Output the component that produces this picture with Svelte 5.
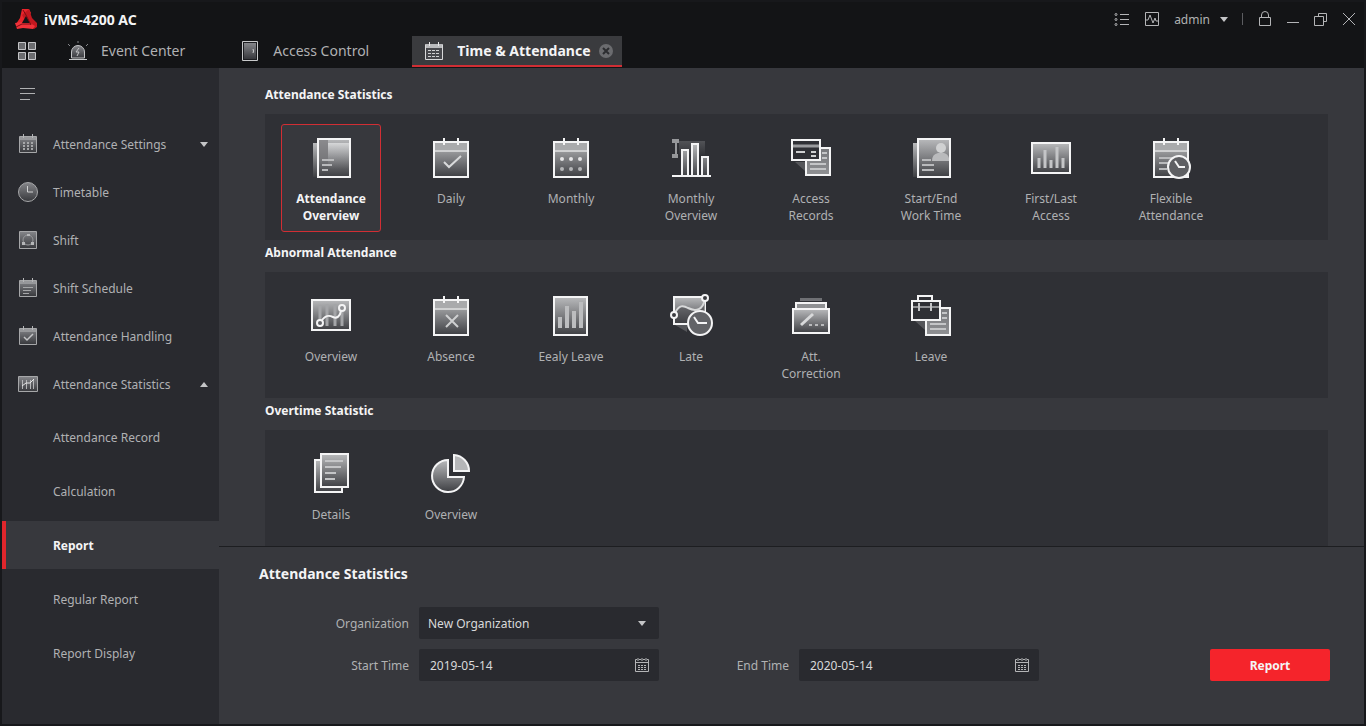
<script lang="ts">
  type Item = { icon: string; label: string };

  const tabs: Item[] = [
    { icon: "alarm", label: "Event Center" },
    { icon: "door", label: "Access Control" },
    { icon: "calendar", label: "Time & Attendance" },
  ];

  const menu = [
    { icon: "settings", label: "Attendance Settings", arrow: "down" },
    { icon: "clock", label: "Timetable", arrow: "" },
    { icon: "shift", label: "Shift", arrow: "" },
    { icon: "schedule", label: "Shift Schedule", arrow: "" },
    { icon: "handling", label: "Attendance Handling", arrow: "" },
    { icon: "statistics", label: "Attendance Statistics", arrow: "up" },
  ];

  const submenu = ["Attendance Record", "Calculation", "Report", "Regular Report", "Report Display"];

  const sections: { title: string; items: Item[] }[] = [
    {
      title: "Attendance Statistics",
      items: [
        { icon: "att-overview", label: "Attendance Overview" },
        { icon: "daily", label: "Daily" },
        { icon: "monthly", label: "Monthly" },
        { icon: "monthly-overview", label: "Monthly Overview" },
        { icon: "access", label: "Access Records" },
        { icon: "work-time", label: "Start/End Work Time" },
        { icon: "first-last", label: "First/Last Access" },
        { icon: "flexible", label: "Flexible Attendance" },
      ],
    },
    {
      title: "Abnormal Attendance",
      items: [
        { icon: "abn-overview", label: "Overview" },
        { icon: "absence", label: "Absence" },
        { icon: "early", label: "Eealy Leave" },
        { icon: "late", label: "Late" },
        { icon: "correction", label: "Att. Correction" },
        { icon: "leave", label: "Leave" },
      ],
    },
    {
      title: "Overtime Statistic",
      items: [
        { icon: "details", label: "Details" },
        { icon: "pie", label: "Overview" },
      ],
    },
  ];

  let activeTab = $state("Time & Attendance");
  let activePage = $state("Report");
  let activeReport = $state("att-overview");
  let organization = $state("New Organization");
  let startTime = $state("2019-05-14");
  let endTime = $state("2020-05-14");
</script>

{#snippet calendarBase()}
  <rect x="7" y="8" width="34" height="35" fill="url(#shade)" />
  <path d="M8 9h32v7H8z" fill="#a9aaac" stroke="none" />
  <path d="M8 17h32" stroke="#d0d1d2" />
  <path d="M17 4v7M31 4v7" />
{/snippet}

{#snippet reportIcon(name: string)}
  <svg class="report-icon" viewBox="0 0 48 48" aria-hidden="true">
    {#if name === "att-overview"}
      <path d="M6 9h4v34H6z" fill="url(#shade)" stroke="none" />
      <rect x="11" y="5" width="32" height="38" fill="url(#shade)" />
      <path d="M12 6h9v20h-9z" fill="#77787b" opacity="0.7" stroke="none" />
      <path d="M21 9h21v26H21z" fill="url(#glow)" stroke="none" />
      <path d="M15 26h12M15 31h10M15 36h6" stroke="#b9babc" />
    {:else if name === "daily"}
      {@render calendarBase()}
      <path d="M17 28l5 5 12-11" stroke="#d9dadb" />
    {:else if name === "monthly"}
      {@render calendarBase()}
      <g fill="#e6e6e7" stroke="none">
        <circle cx="15" cy="25" r="2" /><circle cx="24" cy="25" r="2" /><circle cx="33" cy="25" r="2" />
      </g>
      <g fill="#b4b5b7" stroke="none">
        <circle cx="15" cy="35" r="2" /><circle cx="24" cy="35" r="2" /><circle cx="33" cy="35" r="2" />
      </g>
    {:else if name === "monthly-overview"}
      <path d="M12 7h26v14H12z" fill="url(#shade)" opacity="0.25" stroke="none" />
      <path d="M5 5h7v4H5zM5 20h6v4H5zM8 9h2v11H8z" fill="#97989b" stroke="none" />
      <path d="M15 42V16h6v26M25 42V10h6v32M35 42V23h6v19" fill="url(#shade)" />
      <path d="M5 42h39" />
    {:else if name === "access"}
      <path d="M8 28h10v9z" fill="#55565a" stroke="none" />
      <rect x="19" y="14" width="24" height="27" fill="url(#pale)" />
      <path d="M35 19h5M35 24h5M23 30h16M23 35h16" stroke="#c4c5c7" />
      <rect x="5" y="6" width="28" height="20" fill="#2f3035" />
      <path d="M6 12h26" stroke="#9a9b9e" stroke-width="3" />
      <path d="M9 18h9M24 18h5M24 22h5" stroke="#cfd0d1" />
    {:else if name === "work-time"}
      <path d="M6 9h4v34H6z" fill="url(#shade)" stroke="none" />
      <rect x="11" y="5" width="32" height="38" fill="url(#shade)" />
      <circle cx="34" cy="14" r="5" fill="#d0d1d2" stroke="none" />
      <path d="M25 27q0-7 6-8h6q4 1 5 5v3z" fill="#b9babc" stroke="none" />
      <path d="M15 26h9M15 31h12M15 36h12" stroke="#b9babc" />
    {:else if name === "first-last"}
      <rect x="5" y="9" width="38" height="30" fill="url(#shade)" />
      <path d="M12 34V24M18 34V16M24 34V26M30 34V13M36 34V24" stroke="#c4c5c7" stroke-width="3" />
    {:else if name === "flexible"}
      {@render calendarBase()}
      <path d="M12 24h14M12 29h10M12 35h8" stroke="#b9babc" />
      <circle cx="32" cy="33" r="11" fill="#5e5f63" />
      <path d="M28 27l4 6h6" />
    {:else if name === "abn-overview"}
      <rect x="5" y="8" width="38" height="30" fill="url(#shade)" />
      <path d="M13 14v20M20 12v22M28 12v22M35 20v14" stroke="#a4a5a8" stroke-width="3" />
      <path d="M15 28c4-5 7-5 11-3s7-1 8-6" />
      <circle cx="13" cy="31" r="3" fill="#626367" />
      <circle cx="35" cy="16" r="3" fill="#8e8f92" />
    {:else if name === "absence"}
      {@render calendarBase()}
      <path d="M19 23l12 12M31 23L19 35" stroke="#cfd0d1" />
    {:else if name === "early"}
      <rect x="7" y="5" width="33" height="38" fill="url(#shade)" />
      <path d="M13 36V25M20 36V14M27 36V19M34 36V10" stroke="#bcbdbf" stroke-width="4" />
    {:else if name === "late"}
      <path d="M8 33l12 7V33z" fill="#55565a" stroke="none" />
      <path d="M7 5h31v27H7z" fill="url(#shade)" />
      <path d="M8 21c4-8 8-8 13-5 8 4 15 2 17-9v24H8z" fill="#3d3e42" opacity="0.5" stroke="none" />
      <path d="M8 21c4-8 8-8 13-5 8 4 15 2 17-9" stroke="#d8d9da" />
      <circle cx="7" cy="23" r="3" fill="#3a3b3f" />
      <circle cx="38" cy="6" r="3" fill="#3a3b3f" />
      <circle cx="33" cy="31" r="12" fill="#626367" />
      <path d="M27 25l4 6h9" />
    {:else if name === "correction"}
      <path d="M13 6h22v3H13z" fill="#6f7074" stroke="none" />
      <path d="M9 16v-5h30v5" fill="#8f9093" />
      <rect x="6" y="17" width="36" height="24" fill="url(#shade)" />
      <path d="M14 33l12-11" stroke="#d8d9da" stroke-width="3" />
      <path d="M22 33h3M28 33h3M34 33h3" stroke="#b9babc" />
    {:else if name === "leave"}
      <path d="M8 29h10v9z" fill="#55565a" stroke="none" />
      <rect x="19" y="16" width="24" height="27" fill="url(#pale)" />
      <path d="M35 21h5M35 26h5M23 32h16M23 37h16" stroke="#c4c5c7" />
      <path d="M11 8V4h14v4" />
      <rect x="5" y="9" width="28" height="19" fill="#2f3035" />
      <path d="M6 15h26" stroke="#8f9093" />
      <path d="M12 11v8M24 11v8" stroke="#c4c5c7" />
    {:else if name === "details"}
      <rect x="8" y="10" width="27" height="32" fill="url(#shade)" />
      <rect x="14" y="4" width="27" height="33" fill="url(#shade)" />
      <path d="M18 11h18M18 17h16M18 23h11M18 29h10" stroke="#c4c5c7" />
    {:else if name === "pie"}
      <path d="M21 10a16 16 0 1 0 16 17H21z" fill="url(#shade)" />
      <path d="M27 5a16 16 0 0 1 15 16H27z" fill="#b5b6b8" />
    {/if}
  </svg>
{/snippet}

{#snippet menuIcon(name: string)}
  <svg class="menu-icon" viewBox="0 0 20 20" aria-hidden="true">
    {#if name === "clock"}
      <circle cx="10" cy="10" r="9.5" fill="url(#dim)" />
      <path d="M9.500 4v6H15" stroke="#d0d1d2" />
    {:else if name === "shift"}
      <path d="M1.500 1.500h17v17h-17z" fill="url(#dim)" />
      <circle cx="10" cy="10" r="5" stroke="#97989b" />
      <path d="M9 4h3v2H9zM4 12h3v3H4zM13 12h3v3h-3z" fill="#b5b6b8" stroke="none" />
    {:else if name === "statistics"}
      <path d="M.5 2.500h19v15H.5z" fill="url(#dim)" />
      <path d="M4.500 15V6M8.500 15V6M12.500 15V6M15.500 15V5" stroke="#b5b6b8" />
      <path d="M4 12l4-3h4l4-4" stroke="#e6e6e7" />
    {:else}
      <path d="M1.500 2.500h17v16h-17z" fill="url(#dim)" />
      <path d="M2 3h16v3H2z" fill="#97989b" stroke="none" />
      <path d="M5.500 0v4M14.500 0v4" stroke="#b5b6b8" />
      {#if name === "settings"}
        <path d="M6 8v8M10 8v8M14 8v8" stroke="#a6a7a9" stroke-width="2" stroke-dasharray="2 1" />
      {:else if name === "schedule"}
        <path d="M5 9.500h10M5 12.500h8M5 15.500h6" stroke="#a6a7a9" />
      {:else}
        <path d="M6 11l3 3 6-6" stroke="#c4c5c7" stroke-width="1.5" />
      {/if}
    {/if}
  </svg>
{/snippet}

{#snippet tabIcon(name: string)}
  <svg class="tab-icon" viewBox="0 0 22 22" aria-hidden="true">
    {#if name === "alarm"}
      <path d="M4.500 18v-6a6.500 6.500 0 0 1 13 0v6z" fill="url(#dim)" stroke="#c4c5c7" />
      <path d="M2 19.500h18" stroke="#c4c5c7" />
      <path d="M11 1v2M1 4l2 2M21 4l-2 2" stroke="#85868a" />
      <path d="M12 8l-3 4h3l-2 4" stroke="#c4c5c7" />
    {:else if name === "door"}
      <path d="M3.500 1.500h15v19h-15z" fill="#1c1d20" stroke="#c9cacb" />
      <path d="M5 3h12v16H5z" fill="url(#dim)" stroke="none" />
      <path d="M14 9q1 2 0 4" stroke="#d0d1d2" />
    {:else}
      <path d="M2.500 4.500h17v15h-17z" fill="#47484c" stroke="#d8d9da" />
      <path d="M3 4h16v4H3z" fill="#b9babc" stroke="none" />
      <path d="M6.500 2v4M15.500 2v4" stroke="#e6e6e7" />
      <path d="M5 10.500h12M5 13.500h12M5 16.500h12" stroke="#d0d1d2" stroke-dasharray="3 1" />
    {/if}
  </svg>
{/snippet}

{#snippet dateIcon()}
  <svg viewBox="0 0 16 16" width="16" height="16" fill="none" stroke="#b4b5b7" aria-hidden="true">
    <path d="M3 2.500H1.500v12h13v-12H13M5 2.500h2M9 2.500h2M1.500 5.500h13M4 1v3M8 1v3M12 1v3" />
    <path d="M4 8.500h8M4 10.500h8M4 12.500h8" stroke-dasharray="2 1" />
  </svg>
{/snippet}

<div class="window">
  <header>
    <div class="titlebar">
      <svg class="logo" viewBox="0 0 24 22" aria-hidden="true">
        <path d="M8 1h7l2 4-5 7-6 5-4-1 4-6z" fill="#e8242b" />
        <path d="M15 1l3 9 5 5v4l-3 2-7-5-5-9z" fill="#c2181f" />
        <path d="M1 15l6-1 9 1 5 3-2 3-10-1-6 1z" fill="#f0323a" />
        <path d="M12 8l4 7H8z" fill="#131416" />
        <path d="M9 2l3 5 5 10M2 19l6-3h9" fill="none" stroke="#7c0d12" />
      </svg>
      <span class="app-name">iVMS-4200 AC</span>
      <svg width="0" height="0" aria-hidden="true">
        <defs>
          <linearGradient id="shade" x1="0" y1="0" x2="0" y2="1">
            <stop offset="0" stop-color="#b9babc" /><stop offset="1" stop-color="#3e3f43" />
          </linearGradient>
          <linearGradient id="pale" x1="0" y1="0" x2="0" y2="1">
            <stop offset="0" stop-color="#77787b" /><stop offset="1" stop-color="#8f9093" />
          </linearGradient>
          <linearGradient id="dim" x1="0" y1="0" x2="0" y2="1">
            <stop offset="0" stop-color="#85868a" /><stop offset="1" stop-color="#37383c" />
          </linearGradient>
          <linearGradient id="glow" x1="0" y1="0" x2="0" y2="1">
            <stop offset="0" stop-color="#e0e1e2" stop-opacity="0.8" /><stop offset="1" stop-color="#8f9093" stop-opacity="0" />
          </linearGradient>
        </defs>
      </svg>
      <div class="tools">
        <button type="button" aria-label="Task list">
          <svg viewBox="0 0 16 16"><path d="M6 3.500h9M6 8.500h9M6 13.500h9" /><circle cx="2" cy="3.500" r="1" /><circle cx="2" cy="8.500" r="1" /><circle cx="2" cy="13.500" r="1" /></svg>
        </button>
        <button type="button" aria-label="System status">
          <svg viewBox="0 0 16 16"><path d="M1.500 1.500h13v13h-13zM2 9h2l2-5 3 8 2-5 1 3h2" /></svg>
        </button>
        <button class="user" type="button">admin <span class="caret"></span></button>
        <span class="divider"></span>
        <div class="window-buttons">
          <button type="button" aria-label="Lock">
            <svg viewBox="0 0 16 16"><path d="M2.500 6.500h11v8h-11zM4.500 6.500V4a3.500 3.500 0 0 1 7 0v2.500" /></svg>
          </button>
          <button type="button" aria-label="Minimize">
            <svg viewBox="0 0 16 16"><path d="M2 11.500h12" /></svg>
          </button>
          <button type="button" aria-label="Restore">
            <svg viewBox="0 0 16 16"><path d="M1.500 5.500h9v9h-9zM5.500 5V2.500h8v8H11" /></svg>
          </button>
          <button type="button" aria-label="Close">
            <svg viewBox="0 0 16 16"><path d="M2 2l12 12M14 2L2 14" /></svg>
          </button>
        </div>
      </div>
    </div>

    <nav class="tabs">
      <button class="home" type="button" aria-label="All modules">
        <svg viewBox="0 0 18 18" width="18" height="18" aria-hidden="true">
          <path d="M.5.5h7v7h-7zM10.500.5h7v7h-7zM.5 10.500h7v7h-7zM10.500 10.500h7v7h-7z" fill="#6b6c6f" stroke="#c4c5c7" />
        </svg>
      </button>
      {#each tabs as tab}
        <div class="tab" class:active={tab.label === activeTab}>
          <button class="tab-link" type="button" onclick={() => (activeTab = tab.label)}>
            {@render tabIcon(tab.icon)}
            {tab.label}
          </button>
          {#if tab.label === activeTab}
            <button class="tab-close" type="button" aria-label="Close tab">
              <svg viewBox="0 0 14 14" width="14" height="14" aria-hidden="true">
                <circle cx="7" cy="7" r="7" fill="#6b6c6f" />
                <path d="M4 4l6 6M10 4l-6 6" stroke="#2c2d30" stroke-width="2" />
              </svg>
            </button>
          {/if}
        </div>
      {/each}
    </nav>
  </header>

  <div class="body">
    <aside>
      <button class="collapse" type="button" aria-label="Collapse menu">
        <svg viewBox="0 0 16 12" width="16" height="12" aria-hidden="true">
          <path d="M0 .5h15M0 5.500h15M0 11.500h10" stroke="#b0b1b3" />
        </svg>
      </button>
      {#each menu as item}
        <button class="menu-item" type="button">
          {@render menuIcon(item.icon)}
          <span>{item.label}</span>
          {#if item.arrow}
            <span class="caret" class:up={item.arrow === "up"}></span>
          {/if}
        </button>
      {/each}
      <div class="submenu">
        {#each submenu as page}
          <button class="sub-item" class:active={page === activePage} type="button" onclick={() => (activePage = page)}>
            {page}
          </button>
        {/each}
      </div>
    </aside>

    <main>
      <div class="reports">
        {#each sections as section}
          <section>
            <h2>{section.title}</h2>
            <div class="panel">
              {#each section.items as item}
                <button
                  class="report"
                  class:active={item.icon === activeReport}
                  type="button"
                  onclick={() => (activeReport = item.icon)}
                >
                  {@render reportIcon(item.icon)}
                  <span>{item.label}</span>
                </button>
              {/each}
            </div>
          </section>
        {/each}
      </div>

      <form class="filter" onsubmit={(e) => e.preventDefault()}>
        <h3>Attendance Statistics</h3>
        <div class="fields">
          <label for="organization">Organization</label>
          <div class="field">
            <select id="organization" bind:value={organization}>
              <option>New Organization</option>
            </select>
            <span class="caret"></span>
          </div>
          <label class="first" for="start">Start Time</label>
          <div class="field">
            <input id="start" type="text" bind:value={startTime} />
            <button type="button" aria-label="Pick start date">{@render dateIcon()}</button>
          </div>
          <label for="end">End Time</label>
          <div class="field">
            <input id="end" type="text" bind:value={endTime} />
            <button type="button" aria-label="Pick end date">{@render dateIcon()}</button>
          </div>
          <button class="submit" type="submit">Report</button>
        </div>
      </form>
    </main>
  </div>
</div>

<style>
  :global(body) {
    margin: 0;
    background: #131416;
  }

  .window {
    height: 100vh;
    box-sizing: border-box;
    display: flex;
    flex-direction: column;
    border: 2px solid #17181b;
    background: #131416;
    color: #b0b1b3;
    font-family: "Noto Sans", "Open Sans", sans-serif;
    font-size: 12px;
  }

  button,
  input,
  select {
    font: inherit;
    color: inherit;
    background: none;
    border: 0;
    padding: 0;
    margin: 0;
  }

  button {
    cursor: pointer;
  }

  svg {
    display: block;
    flex: none;
  }

  h2,
  h3 {
    margin: 0;
    color: #f4f4f5;
    font-weight: 700;
  }

  .caret {
    flex: none;
    width: 0;
    height: 0;
    border: 4px solid transparent;
    border-top: 5px solid #c4c5c7;
    border-bottom: 0;
  }

  .caret.up {
    border-top: 0;
    border-bottom: 5px solid #c4c5c7;
  }

  .titlebar {
    height: 34px;
    display: flex;
    align-items: center;
    padding: 0 7px 0 12px;
  }

  .logo {
    width: 24px;
    height: 22px;
  }

  .app-name {
    margin-left: 6px;
    color: #f4f4f5;
    font-size: 14px;
    font-weight: 700;
  }

  .tools {
    margin-left: auto;
    display: flex;
    align-items: center;
    gap: 14px;
  }

  .tools svg {
    width: 16px;
    height: 16px;
    fill: none;
    stroke: #b4b5b7;
  }

  .user {
    display: flex;
    align-items: center;
    gap: 10px;
  }

  .divider {
    width: 1px;
    height: 12px;
    background: #5c5d61;
  }

  .window-buttons {
    display: flex;
    gap: 12px;
  }

  .tabs {
    height: 32px;
    display: flex;
    align-items: flex-start;
    font-size: 14px;
  }

  .home {
    height: 30px;
    padding: 0 20px 0 16px;
  }

  .tab {
    height: 31px;
    box-sizing: border-box;
    display: flex;
    align-items: center;
    padding: 0 43px 0 11px;
    border-bottom: 2px solid transparent;
  }

  .tab.active {
    gap: 8px;
    padding-right: 9px;
    border-bottom-color: #d12e34;
    background: #3a3b3e;
    color: #f4f4f5;
    font-weight: 700;
  }

  .tab-link {
    display: flex;
    align-items: center;
    gap: 12px;
  }

  .tab-icon {
    width: 22px;
    height: 22px;
    fill: none;
  }

  .body {
    flex: 1;
    min-height: 0;
    display: flex;
  }

  aside {
    flex: none;
    width: 217px;
    background: #292a2f;
    overflow: hidden;
  }

  .collapse {
    height: 52px;
    display: flex;
    align-items: center;
    padding: 0 18px;
  }

  .menu-item {
    width: 100%;
    height: 48px;
    display: flex;
    align-items: center;
    gap: 15px;
    padding: 0 11px 0 16px;
  }

  .menu-item .caret {
    margin-left: auto;
  }

  .menu-icon {
    width: 20px;
    height: 20px;
    fill: none;
    stroke: #a6a7a9;
  }

  .submenu {
    display: flex;
    flex-direction: column;
    gap: 6px;
    padding-top: 5px;
  }

  .sub-item {
    height: 48px;
    padding-left: 47px;
    border-left: 4px solid transparent;
    text-align: left;
  }

  .sub-item.active {
    border-left-color: #e0262c;
    background: #37383d;
    color: #f4f4f5;
    font-weight: 700;
  }

  main {
    flex: 1;
    min-width: 0;
    display: flex;
    flex-direction: column;
    background: #37383d;
  }

  .reports {
    flex: 1;
    min-height: 0;
    padding: 14px 36px 0 46px;
    overflow-y: auto;
    scrollbar-width: none;
  }

  h2 {
    padding-bottom: 6px;
    font-size: 12px;
    line-height: 26px;
  }

  .panel {
    display: flex;
    gap: 20px;
    padding: 10px 16px 8px;
    background: #2f3035;
  }

  .report {
    width: 100px;
    height: 108px;
    box-sizing: border-box;
    display: flex;
    flex-direction: column;
    align-items: center;
    gap: 8px;
    padding: 9px 12px;
    border: 1px solid transparent;
    border-radius: 3px;
    line-height: 17px;
  }

  .report.active {
    border-color: #d12e34;
    background: #37383d;
    color: #f4f4f5;
    font-weight: 700;
  }

  .report-icon {
    width: 48px;
    height: 48px;
    fill: none;
    stroke: #f4f4f5;
    stroke-width: 2;
  }

  .filter {
    padding: 15px 34px 43px 40px;
    border-top: 1px solid #1d1e21;
  }

  h3 {
    font-size: 14px;
    line-height: 24px;
  }

  .fields {
    display: grid;
    grid-template-columns: 150px 240px 120px 240px 1fr;
    gap: 10px;
    align-items: center;
    margin-top: 21px;
  }

  label {
    text-align: right;
  }

  label.first {
    grid-column: 1;
  }

  .field {
    height: 32px;
    box-sizing: border-box;
    display: flex;
    align-items: center;
    padding: 0 9px;
    border-radius: 2px;
    background: #292a2f;
    color: #d8d9da;
  }

  .field select,
  .field input {
    flex: 1;
    min-width: 0;
    height: 32px;
    appearance: none;
    outline: none;
  }

  .field input {
    padding-left: 2px;
  }

  .field .caret {
    margin-right: 4px;
  }

  .submit {
    width: 120px;
    height: 32px;
    justify-self: end;
    border-radius: 2px;
    background: #f5242b;
    color: #f4f4f5;
    font-weight: 700;
  }
</style>
